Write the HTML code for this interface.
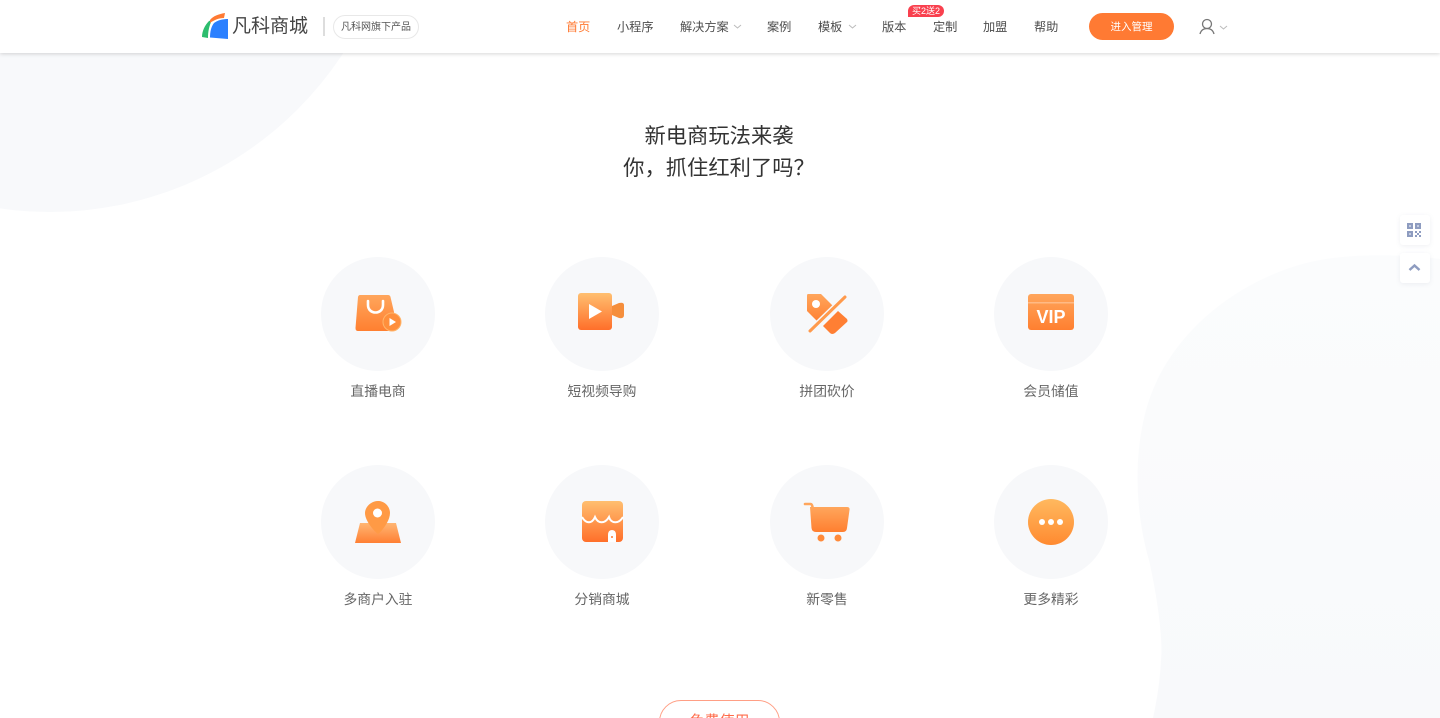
<!DOCTYPE html>
<html lang="zh-CN">
<head>
<meta charset="utf-8">
<title>凡科商城</title>
<style>
*{margin:0;padding:0;box-sizing:border-box}
html,body{width:1440px;height:718px;overflow:hidden;background:#fff}
body{position:relative;font-family:"Liberation Sans","Noto Sans CJK SC",sans-serif;color:#333}
.abs{position:absolute;white-space:nowrap}
.hdr{position:absolute;left:0;top:0;width:1440px;height:53px;background:#fff;box-shadow:0 1px 4px rgba(0,0,0,.16)}
.nav{position:absolute;top:19px;font-size:12.200px;line-height:16px;color:#4d4d4d;white-space:nowrap}
.lab{position:absolute;width:160px;text-align:center;font-size:13.800px;line-height:20px;color:#666}
.c{position:absolute;width:114px;height:114px;border-radius:50%;background:#f7f8fa}
.ic{position:absolute;overflow:visible}
.side{position:absolute;left:1400px;width:30px;height:30px;background:#fff;border-radius:3px;box-shadow:0 1px 5px rgba(120,130,160,.12)}
</style>
</head>
<body>
<svg class="abs" style="left:0;top:0" width="1440" height="718">
<defs><linearGradient id="bg" x1="0" y1="0" x2="0" y2="1"><stop offset="0" stop-color="#fbfcfd"/><stop offset="1" stop-color="#f8f9fb"/></linearGradient></defs>
<ellipse cx="50" cy="-138" rx="350" ry="350" fill="#f8f9fb"/>
<path d="M1440 259C1400 254 1350 253 1310 262C1230 282 1165 340 1146 410C1130 470 1140 530 1149 560C1158 600 1163 640 1161 660C1160 680 1157 700 1153 718H1440Z" fill="url(#bg)"/>
</svg>

<div class="hdr"></div>

<svg class="ic" style="left:201px;top:12px" width="28" height="28" viewBox="0 0 28 28">
<path d="M8 9C4 13 1 19 1 25L7 26C7 20 8 14 11 8Z" fill="#2dbd6e"/>
<path d="M9 8C12 4 18 2 24 1L23 6C18 6 13 8 9 11Z" fill="#ff7a33"/>
<path d="M13 11C17 8 22 7 27 7V27L9 25.500C9 20 10 15 13 11Z" fill="#2b80ff"/>
</svg>
<div class="abs" style="left:232px;top:14px;font-size:19px;line-height:26px;width:76px;color:#444">凡科商城</div>
<div class="abs" style="left:323px;top:17px;width:1.500px;height:19px;background:#ddd"></div>
<div class="abs" style="left:333px;top:15px;width:86px;height:24px;border:1px solid #e8e8e8;border-radius:12px;font-size:10px;line-height:23px;text-align:center;color:#555">凡科网旗下产品</div>

<div class="nav" style="left:566px;color:#ff7a33">首页</div>
<div class="nav" style="left:617px">小程序</div>
<div class="nav" style="left:680px">解决方案</div>
<svg class="ic" style="left:733px;top:24px" width="9" height="5"><path d="M1 1L4.500 4L8 1" fill="none" stroke="#bbb"/></svg>
<div class="nav" style="left:767px">案例</div>
<div class="nav" style="left:818px">模板</div>
<svg class="ic" style="left:848px;top:24px" width="9" height="5"><path d="M1 1L4.500 4L8 1" fill="none" stroke="#bbb"/></svg>
<div class="nav" style="left:882px">版本</div>
<div class="abs" style="left:908px;top:5px;width:36px;height:12px;background:#f9404e;border-radius:6px 6px 6px 0;color:#fff;font-size:9px;line-height:12px;text-align:center">买2送2</div>
<div class="nav" style="left:933px">定制</div>
<div class="nav" style="left:983px">加盟</div>
<div class="nav" style="left:1034px">帮助</div>
<div class="abs" style="left:1089px;top:13px;width:85px;height:27px;background:#ff7a33;border-radius:14px;color:#fff;font-size:10.500px;line-height:28px;text-align:center">进入管理</div>
<svg class="ic" style="left:1198px;top:18px" width="18" height="18" viewBox="0 0 18 18">
<circle cx="9" cy="6" r="4.500" fill="none" stroke="#777" stroke-width="1.300"/>
<path d="M2 16C3 12 6 10.500 9 10.500C12 10.500 15 12 16 16" fill="none" stroke="#777" stroke-width="1.300"/>
</svg>
<svg class="ic" style="left:1219px;top:25px" width="9" height="5"><path d="M1 1L4.500 4L8 1" fill="none" stroke="#bbb"/></svg>

<div class="abs" style="left:0;top:120px;width:1438px;text-align:center;font-size:21.300px;line-height:32px;color:#333">新电商玩法来袭<br>你，抓住红利了吗？</div>

<div class="c" style="left:321px;top:257px"></div>
<div class="c" style="left:545px;top:257px"></div>
<div class="c" style="left:770px;top:257px"></div>
<div class="c" style="left:994px;top:257px"></div>
<div class="c" style="left:321px;top:465px"></div>
<div class="c" style="left:545px;top:465px"></div>
<div class="c" style="left:770px;top:465px"></div>
<div class="c" style="left:994px;top:465px"></div>

<svg class="ic" style="left:0;top:0" width="1440" height="718">
<defs>
<linearGradient id="a" x1="0" y1="0" x2="0" y2="1"><stop offset="0" stop-color="#ffa65c"/><stop offset="1" stop-color="#ff7f30"/></linearGradient>
<linearGradient id="b" x1="0" y1="0" x2="0" y2="1"><stop offset="0" stop-color="#ffbf70"/><stop offset="1" stop-color="#ff6f2a"/></linearGradient>
<linearGradient id="d" x1="0" y1="0" x2="0" y2="1"><stop offset="0" stop-color="#ffb95f"/><stop offset="1" stop-color="#ff8a30"/></linearGradient>
<linearGradient id="m" x1="0" y1="0" x2="0" y2="1"><stop offset="0" stop-color="#ffb673"/><stop offset="1" stop-color="#ff7f33"/></linearGradient>
</defs>

<!-- 直播电商 -->
<path d="M360 295H388Q390 295 390.500 297L394 312V331H358Q355.500 331 355.500 328L358 297Q358.500 295 360 295Z" fill="url(#a)"/>
<path d="M368 301V305C368 315 383 315 383 305V301" fill="none" stroke="#fff" stroke-width="2.600" stroke-linecap="round"/>
<circle cx="392" cy="322" r="9" fill="#ff8f3c" stroke="#ffb56b" stroke-width="1"/>
<path d="M389.500 318L396 322L389.500 326Z" fill="#fff"/>

<!-- 短视频导购 -->
<rect x="578" y="293" width="34" height="37" rx="3" fill="url(#b)"/>
<path d="M612 306L619 303Q624 302 624 305V315Q624 319 619 318L612 315Z" fill="#f58e3c"/>
<path d="M589 304L602 311.500L589 319Z" fill="#fff"/>

<!-- 拼团砍价 -->
<path d="M808 294H821L834 307L819 323L807 311V296Q807 294 808 294Z" fill="url(#a)"/>
<path d="M838 311L847 319Q848 321 847 322L835 333Q832 335 830 333L823 326Z" fill="#ff7f33"/>
<circle cx="816" cy="304" r="4" fill="#fff"/>
<path d="M810 331L845 297" stroke="#f7f8fa" stroke-width="6" stroke-linecap="round"/>
<path d="M810 331L845 297" stroke="#ff9a4c" stroke-width="3" stroke-linecap="round"/>

<!-- VIP -->
<rect x="1028" y="294" width="46" height="36" rx="3" fill="url(#a)"/>
<rect x="1028" y="302" width="46" height="1.500" fill="#fff" opacity=".3"/>
<text x="1051" y="323" font-family="Liberation Sans" font-weight="700" font-size="18" fill="#fff" text-anchor="middle">VIP</text>

<!-- 多商户入驻 -->
<path d="M360 523H396L401 543H355Z" fill="url(#m)"/>
<path d="M378 501C385 501 390 507 390 513C390 521 382 531 378 534C374 531 365 521 365 513C365 507 371 501 378 501Z" fill="#ff9a45"/>
<circle cx="377.500" cy="513" r="4.500" fill="#fff"/>

<!-- 分销商城 -->
<rect x="582" y="501" width="41" height="41" rx="4" fill="url(#b)"/>
<path d="M582 517C586 524 592 524 595 517C598 524 605 524 609 517C611 524 619 524 623 517" fill="none" stroke="#fff" stroke-width="2"/>
<path d="M608 542V535Q608 530 612 530Q616 530 616 535V542Z" fill="#fff"/>
<circle cx="612" cy="537" r="1" fill="#ff7a33"/>

<!-- 新零售 -->
<path d="M805 504H810.500Q812 504 812.500 507L813 510" fill="none" stroke="#ffa65c" stroke-width="2.600" stroke-linecap="round"/>
<path d="M810 507H847Q850 507 849.500 510L847 528Q846.500 532 843 532H816Q812 532 811.500 528Z" fill="url(#a)"/>
<circle cx="821" cy="538" r="3.500" fill="#ff8a3a"/>
<circle cx="838" cy="538" r="3.500" fill="#ff8a3a"/>

<!-- 更多精彩 -->
<circle cx="1051" cy="522" r="23" fill="url(#d)"/>
<circle cx="1042" cy="522" r="3" fill="#fff"/>
<circle cx="1051" cy="522" r="3" fill="#fff"/>
<circle cx="1060" cy="522" r="3" fill="#fff"/>
</svg>

<div class="lab" style="left:298px;top:382px">直播电商</div>
<div class="lab" style="left:522px;top:382px">短视频导购</div>
<div class="lab" style="left:747px;top:382px">拼团砍价</div>
<div class="lab" style="left:971px;top:382px">会员储值</div>
<div class="lab" style="left:298px;top:590px">多商户入驻</div>
<div class="lab" style="left:522px;top:590px">分销商城</div>
<div class="lab" style="left:747px;top:590px">新零售</div>
<div class="lab" style="left:971px;top:590px">更多精彩</div>

<div class="side" style="top:215px"></div>
<svg class="ic" style="left:1406px;top:222px" width="16" height="16" viewBox="0 0 16 16">
<path d="M1 1H7V7H1ZM9 1H15V7H9ZM1 9H7V15H1Z" fill="#8e9cc0"/>
<rect x="3" y="3" width="2" height="2" fill="#c5cde0"/><rect x="11" y="3" width="2" height="2" fill="#c5cde0"/><rect x="3" y="11" width="2" height="2" fill="#c5cde0"/>
<path d="M9 9H11V11H9ZM13 9H15V11H13ZM11 11H13V13H11ZM9 13H11V15H9ZM13 13H15V15H13Z" fill="#8e9cc0"/>
</svg>
<div class="side" style="top:253px"></div>
<svg class="ic" style="left:1408px;top:263px" width="13" height="9" viewBox="0 0 13 9"><path d="M1.500 7L6.500 2.500L11.500 7" fill="none" stroke="#8e9cc0" stroke-width="2.500"/></svg>

<div class="abs" style="left:659px;top:700px;width:121px;height:44px;border:1px solid #ff9f85;border-radius:22px;background:#fff;color:#ff6b4a;font-size:15px;line-height:42px;text-align:center">免费使用</div>
</body>
</html>
